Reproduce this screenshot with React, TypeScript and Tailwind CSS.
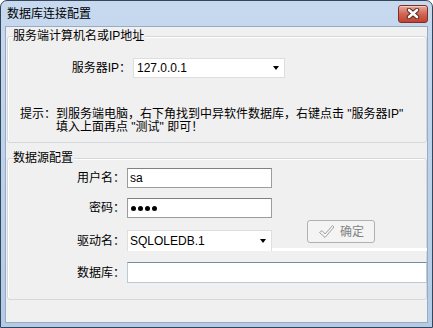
import React from 'react';

function Arrow() {
  return <span className="h-0 w-0 border-x-[3.5px] border-t-[4px] border-x-transparent border-t-black" />;
}

function CloseButton() {
  return (
    <div className="flex h-[18px] w-[30px] items-center justify-center rounded-[3px] border border-[#7e2f25] bg-gradient-to-b from-[#e7a99b] via-[#cf6654] to-[#c2412f] shadow-[inset_0_1px_0_rgba(255,255,255,0.45)]">
      <svg width="14" height="11" viewBox="0 0 14 11">
        <path d="M3 2 L11 9 M11 2 L3 9" stroke="#5a2018" strokeWidth="4.4" strokeLinecap="round" />
        <path d="M3 2 L11 9 M11 2 L3 9" stroke="#ffffff" strokeWidth="2.6" strokeLinecap="round" />
      </svg>
    </div>
  );
}

function CheckIcon() {
  return (
    <svg width="17" height="15" viewBox="0 0 17 15" className="mr-[5px]">
      <path
        d="M1.5 8.5 L4 6.5 L7 10 L14.5 1.5 L16 3 L7 13.5 Z"
        fill="none"
        stroke="#a3a3a3"
        strokeWidth="1"
        strokeLinejoin="round"
      />
    </svg>
  );
}

interface GroupProps {
  title: string;
  className?: string;
  children: React.ReactNode;
}

function Group({ title, className, children }: GroupProps) {
  return (
    <div
      className={`relative ml-[1px] rounded-[3px] border border-[#d3d8dc] shadow-[inset_1px_1px_0_#ffffff] ${className ?? ''}`}
    >
      <span className="absolute left-[5px] top-[-8px] bg-[#f0f0f0] pr-[1px] leading-[14px]">{title}</span>
      {children}
    </div>
  );
}

function Label({ text, width }: { text: string; width: string }) {
  return <span className={`${width} shrink-0 text-right`}>{text}</span>;
}

export default function App() {
  return (
    <div className="h-[328px] w-[433px] bg-white font-['Liberation_Sans','Noto_Sans_CJK_SC',sans-serif] text-[12px] text-black">
      <div className="flex h-full flex-col rounded-t-[7px] border border-[#36465a] bg-gradient-to-b from-[#c6d9ef] via-[#bcd2ec] to-[#b3cbe6]">
        {/* title bar */}
        <div className="flex h-[25px] shrink-0 items-center justify-between pl-[6px] pr-[4px]">
          <span className="leading-[14px]">数据库连接配置</span>
          <CloseButton />
        </div>

        {/* client area */}
        <div className="mx-[4px] flex flex-1 flex-col overflow-hidden border border-[#9aabbf] bg-[#f0f0f0]">
          <Group title="服务端计算机名或IP地址" className="mt-[9px] h-[107px]">
            <div className="mt-[21px] flex h-[20px] items-center">
              <Label text="服务器IP：" width="w-[123px]" />
              <div className="ml-[2px] flex h-[20px] w-[152px] items-center justify-between border border-[#dedede] bg-white pl-[3px] pr-[5px]">
                <span>127.0.0.1</span>
                <Arrow />
              </div>
            </div>
            <div className="mt-[30px] flex pl-[12px] leading-[13px]">
              <span>提示：</span>
              <div className="flex flex-col">
                <span>到服务端电脑，右下角找到中异软件数据库，右键点击 "服务器IP"</span>
                <span>填入上面再点 "测试" 即可！</span>
              </div>
            </div>
          </Group>

          <Group title="数据源配置" className="mt-[15px] h-[142px]">
            <div className="mt-[9px] flex h-[20px] items-center">
              <Label text="用户名：" width="w-[117px]" />
              <div className="ml-[2px] flex h-[20px] w-[145px] items-center border border-[#9c9c9c] border-t-[#808080] bg-white pl-[2px]">
                sa
              </div>
            </div>
            <div className="mt-[10px] flex h-[20px] items-center">
              <Label text="密码：" width="w-[117px]" />
              <div className="ml-[2px] flex h-[20px] w-[145px] items-center gap-[2px] border border-[#9c9c9c] border-t-[#808080] bg-white pl-[3px]">
                <span className="h-[5px] w-[5px] rounded-full bg-black" />
                <span className="h-[5px] w-[5px] rounded-full bg-black" />
                <span className="h-[5px] w-[5px] rounded-full bg-black" />
                <span className="h-[5px] w-[5px] rounded-full bg-black" />
              </div>
            </div>
            <div className="mt-[2px] flex h-[31px] items-end">
              <div className="flex h-[21px] items-center">
                <Label text="驱动名：" width="w-[117px]" />
              </div>
              <div className="ml-[2px] flex h-[21px] w-[145px] items-center justify-between border border-[#dedede] border-b-0 bg-white pl-[2px] pr-[5px]">
                <span>SQLOLEDB.1</span>
                <Arrow />
              </div>
              <div className="mr-[-1px] flex h-[31px] flex-1 flex-col justify-between">
                <button
                  disabled
                  className="ml-[35px] flex h-[23px] w-[68px] items-center justify-center rounded-[3px] border border-[#adb2b5] bg-[#f4f4f4] text-[#838383]"
                >
                  <CheckIcon />
                  确定
                </button>
                <div className="h-[3px] bg-white" />
              </div>
            </div>
            <div className="mt-[11px] flex h-[21px] items-center">
              <Label text="数据库：" width="w-[117px]" />
              <div className="ml-[2px] mr-[-1px] h-[21px] flex-1 border border-[#b9cbd8] border-t-[#6f8ea8] bg-white" />
            </div>
          </Group>
        </div>
        <div className="h-[4px] shrink-0" />
      </div>
    </div>
  );
}
